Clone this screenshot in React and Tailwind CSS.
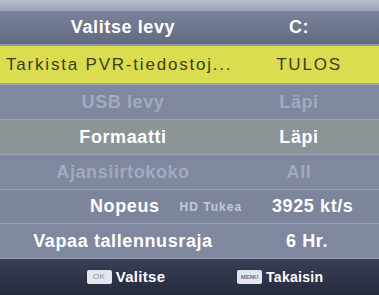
export default function App() {
  const font = { fontFamily: '"Liberation Sans", Arial, sans-serif' }

  return (
    <div className="w-[379px] h-[295px] overflow-hidden flex flex-col bg-[#7f889e]" style={font}>
      {/* header band */}
      <div className="h-[11px] bg-gradient-to-b from-[#b8bfd0] to-[#9aa3b8]" />
      <div className="h-[33px] flex items-center bg-gradient-to-b from-[#7a839b] to-[#626a81] text-white font-bold text-[18px] tracking-[0.6px]">
        <div className="w-[246px] text-center">Valitse levy</div>
        <div className="w-[106px] text-center">C:</div>
      </div>
      <div className="h-[2px] bg-[#8d96ab]" />

      {/* selected row */}
      <div className="h-[37px] flex items-center bg-[#d9dd4f] text-[#3b3d1c] text-[17px] tracking-[1.8px]">
        <div className="w-[262px] pl-[6px] whitespace-nowrap">Tarkista PVR-tiedostoj...</div>
        <div className="w-[94px] text-center">TULOS</div>
      </div>
      <div className="h-[2px] bg-[#9aa3b6]" />

      <Row left="USB levy" right="Läpi" dim />
      <Row left="Formaatti" right="Läpi" tone="bg-[#8c9497]" />
      <Row left="Ajansiirtokoko" right="All" dim />
      <div className="h-[34px] flex items-center bg-[#7c859c] border-b border-[#9aa2b5] text-white font-bold text-[18px] tracking-[0.6px]">
        <div className="w-[264px] flex items-center gap-[20px] pl-[90px]">
          <span>Nopeus</span>
          <span className="text-[12px] text-[#c3c9d8] tracking-[1px]">HD Tukea</span>
        </div>
        <div className="whitespace-nowrap pl-[8px]">3925 kt/s</div>
      </div>
      <Row left="Vapaa tallennusraja" right="6 Hr." rightPad="pl-[16px]" />

      {/* footer */}
      <div className="flex-1 flex items-center bg-gradient-to-b from-[#3a3f55] to-[#262a3d] text-white font-bold text-[15px] tracking-[0.3px]">
        <div className="w-[246px] flex items-center justify-center gap-[4px] pl-[6px]">
          <span className="w-[25px] h-[14px] rounded-[2px] bg-[#e4e6ee] text-[#8a8f9e] text-[8px] font-normal flex items-center justify-center">OK</span>
          <span>Valitse</span>
        </div>
        <div className="flex items-center gap-[4px] -ml-[9px]">
          <span className="w-[25px] h-[14px] rounded-[2px] bg-[#e4e6ee] text-[#6a7090] text-[6px] tracking-normal flex items-center justify-center">MENU</span>
          <span className="text-[14px]">Takaisin</span>
        </div>
      </div>
    </div>
  )
}

function Row({ left, right, dim, tone = 'bg-[#7f889e]', rightPad = '' }) {
  return (
    <div
      className={`h-[35px] flex items-center border-b border-[#9aa2b5] font-bold text-[18px] tracking-[0.6px] ${tone} ${
        dim ? 'text-[#a2aac0]' : 'text-white'
      }`}
    >
      <div className="w-[246px] text-center">{left}</div>
      <div className={`w-[106px] text-center ${rightPad}`}>{right}</div>
    </div>
  )
}
